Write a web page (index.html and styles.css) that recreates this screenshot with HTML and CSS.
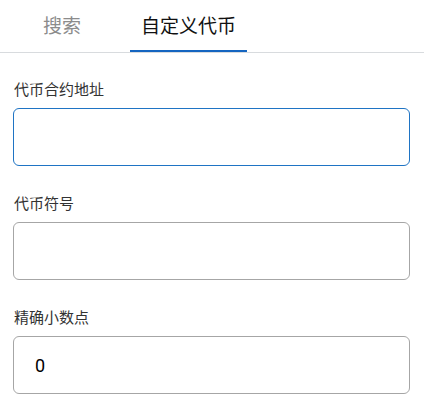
FILE: index.html
```html
<!DOCTYPE html>
<html lang="zh">
<head>
<meta charset="utf-8">
<link rel="stylesheet" href="styles.css">
</head>
<body>
<div class="tabs">
  <div class="tab">搜索</div>
  <div class="tab active">自定义代币</div>
</div>
<form class="form">
  <div class="field">
    <label class="label">代币合约地址</label>
    <div class="input focused"></div>
  </div>
  <div class="field">
    <label class="label">代币符号</label>
    <div class="input"></div>
  </div>
  <div class="field">
    <label class="label">精确小数点</label>
    <div class="input"><span class="value">0</span></div>
  </div>
</form>
</body>
</html>
```
FILE: styles.css
```css
html, body {
  margin: 0;
  padding: 0;
  background: #fff;
  font-family: Roboto, "Noto Sans CJK SC", sans-serif;
}
.tabs {
  display: flex;
  height: 52px;
  border-bottom: 1px solid #d8dbde;
  padding-left: 32px;
  gap: 38px;
}
.tab {
  box-sizing: border-box;
  height: 52px;
  padding: 0 11px;
  display: flex;
  align-items: center;
  font-size: 19px;
  color: #8c8c8c;
  padding-bottom: 4px;
}
.tab.active {
  color: #111;
  border-bottom: 2px solid #1565c0;
  padding-bottom: 2px;
}
.form {
  padding: 27px 14px 0 13px;
  display: flex;
  flex-direction: column;
  gap: 28px;
}
.field {
  display: flex;
  flex-direction: column;
  gap: 8px;
}
.label {
  font-size: 15px;
  line-height: 20px;
  color: #333;
  padding-left: 1px;
}
.input {
  box-sizing: border-box;
  height: 58px;
  border: 1px solid #a6a6a6;
  border-radius: 6px;
  display: flex;
  align-items: center;
  padding-left: 21px;
}
.input.focused {
  border-color: #1f74c4;
}
.value {
  font-size: 18px;
  color: #000;
}
```
